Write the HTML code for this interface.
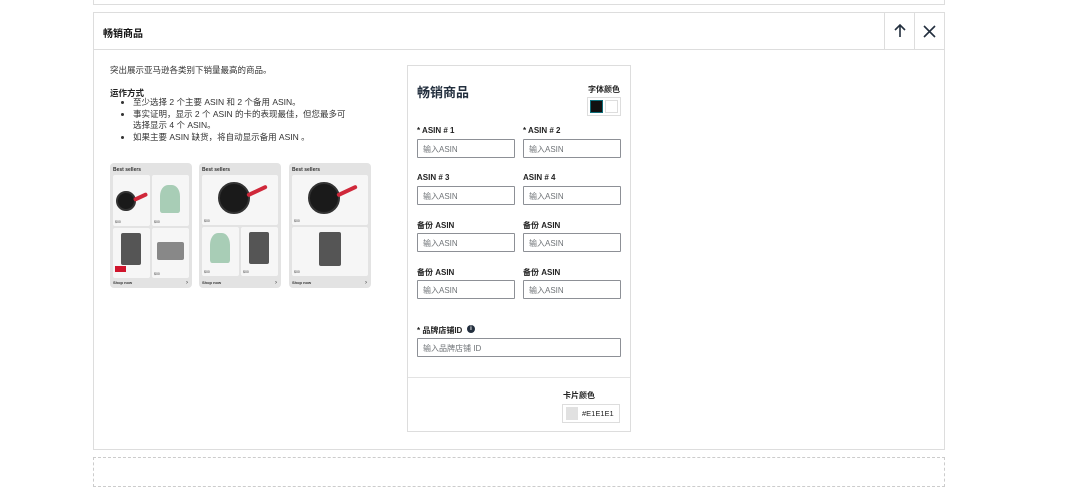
<!DOCTYPE html>
<html><head><meta charset="utf-8"><style>
*{box-sizing:border-box;margin:0;padding:0}
body{width:1080px;height:475px;background:#fff;position:relative;overflow:hidden;font-family:"Liberation Sans","Noto Sans CJK SC",sans-serif;color:#111;}
.a{position:absolute}
.lbl{position:absolute;font-size:8px;font-weight:bold;color:#222}
.inp{position:absolute;width:98px;height:19px;border:1px solid #8d9096;font-size:8px;color:#6f7377;padding:4px 5px;border-radius:1px}
.card{position:absolute;top:163px;width:82px;height:125px;background:#e3e3e3;border-radius:4px}
.card .t{position:absolute;left:3px;top:4px;font-size:5px;font-weight:bold;color:#333}
.card .s{position:absolute;left:3px;bottom:3px;font-size:4px;font-weight:bold;color:#333}
.card .ar{position:absolute;right:4px;bottom:2px;font-size:6px;color:#333}
.tile{position:absolute;background:#f6f6f6;border-radius:2px}
.pr{position:absolute;left:2px;bottom:2px;font-size:3.5px;color:#444}
.pan{position:absolute;border-radius:50%;background:#1a1a1a;border:2px solid #333}
.hd{position:absolute;height:4px;background:#d0283a;border-radius:2px;transform:rotate(-25deg)}
.ket{position:absolute;background:#a8cdb6;border-radius:40% 40% 10% 10%}
.cm{position:absolute;background:#555;border-radius:2px}
</style></head><body>
<div class="a" style="left:93px;top:-2px;width:852px;height:7px;border:1px solid #ddd"></div>
<div class="a" style="left:93px;top:12px;width:852px;height:438px;border:1px solid #ddd"></div>
<div class="a" style="left:94px;top:49px;width:850px;height:1px;background:#ddd"></div>
<div class="a" style="left:103px;top:25px;font-size:10px;font-weight:bold">畅销商品</div>
<div class="a" style="left:884px;top:13px;width:1px;height:36px;background:#ddd"></div>
<div class="a" style="left:914px;top:13px;width:1px;height:36px;background:#ddd"></div>
<svg class="a" style="left:892px;top:23px" width="16" height="16" viewBox="0 0 16 16"><path d="M8 14V2M3 7l5-5 5 5" fill="none" stroke="#232f3e" stroke-width="1.6"/></svg>
<svg class="a" style="left:922px;top:24px" width="15" height="15" viewBox="0 0 15 15"><path d="M2 2l11 11M13 2L2 13" fill="none" stroke="#232f3e" stroke-width="1.6"/></svg>
<div class="a" style="left:93px;top:457px;width:852px;height:30px;border:1px dashed #ccc"></div>

<div class="a" style="left:110px;top:65px;font-size:8.5px;color:#333;line-height:11px">突出展示亚马逊各类别下销量最高的商品。</div>
<div class="a" style="left:110px;top:87px;font-size:8.5px;font-weight:bold;color:#222">运作方式</div>
<ul class="a" style="left:133px;top:97px;width:219px;font-size:8.5px;color:#333;line-height:11.5px;list-style:disc">
<li>至少选择 2 个主要 ASIN 和 2 个备用 ASIN。</li>
<li>事实证明，显示 2 个 ASIN 的卡的表现最佳，但您最多可选择显示 4 个 ASIN。</li>
<li>如果主要 ASIN 缺货，将自动显示备用 ASIN 。</li>
</ul>

<div class="card" style="left:110px"><div class="t">Best sellers</div>
<div class="tile" style="left:3px;top:12px;width:37px;height:51px"><div class="pan" style="left:3px;top:16px;width:20px;height:20px"></div><div class="hd" style="left:20px;top:20px;width:15px"></div><div class="pr">$00</div></div>
<div class="tile" style="left:42px;top:12px;width:37px;height:51px"><div class="ket" style="left:8px;top:10px;width:20px;height:28px"></div><div class="pr">$00</div></div>
<div class="tile" style="left:3px;top:65px;width:37px;height:50px"><div class="cm" style="left:8px;top:5px;width:20px;height:32px"></div><div class="a" style="left:2px;top:38px;width:11px;height:6px;background:#d0142c"></div></div>
<div class="tile" style="left:42px;top:65px;width:37px;height:50px"><div class="cm" style="left:5px;top:14px;width:27px;height:18px;background:#888"></div><div class="pr">$00</div></div>
<div class="s">Shop now</div><div class="ar">›</div></div>

<div class="card" style="left:199px"><div class="t">Best sellers</div>
<div class="tile" style="left:3px;top:12px;width:76px;height:50px"><div class="pan" style="left:16px;top:7px;width:32px;height:32px"></div><div class="hd" style="left:44px;top:14px;width:22px"></div><div class="pr">$00</div></div>
<div class="tile" style="left:3px;top:64px;width:37px;height:49px"><div class="ket" style="left:8px;top:6px;width:20px;height:30px"></div><div class="pr">$00</div></div>
<div class="tile" style="left:42px;top:64px;width:37px;height:49px"><div class="cm" style="left:8px;top:5px;width:20px;height:32px"></div><div class="pr">$00</div></div>
<div class="s">Shop now</div><div class="ar">›</div></div>

<div class="card" style="left:289px"><div class="t">Best sellers</div>
<div class="tile" style="left:3px;top:12px;width:76px;height:50px"><div class="pan" style="left:16px;top:7px;width:32px;height:32px"></div><div class="hd" style="left:44px;top:14px;width:22px"></div><div class="pr">$00</div></div>
<div class="tile" style="left:3px;top:64px;width:76px;height:49px"><div class="cm" style="left:27px;top:5px;width:22px;height:34px"></div><div class="pr">$00</div></div>
<div class="s">Shop now</div><div class="ar">›</div></div>

<div class="a" style="left:407px;top:65px;width:224px;height:367px;border:1px solid #ddd"></div>
<div class="a" style="left:408px;top:377px;width:222px;height:1px;background:#e3e3e3"></div>
<div class="a" style="left:417px;top:82px;font-size:13px;font-weight:bold;color:#232f3e">畅销商品</div>
<div class="lbl" style="left:588px;top:84px">字体颜色</div>
<div class="a" style="left:587px;top:97px;width:34px;height:19px;border:1px solid #ddd"></div>
<div class="a" style="left:590px;top:100px;width:13px;height:13px;background:#111;border:1px solid #0e6d79"></div>
<div class="a" style="left:605px;top:100px;width:13px;height:13px;background:#fff;border:1px solid #ddd"></div>

<div class="lbl" style="left:417px;top:126px">* ASIN # 1</div><div class="lbl" style="left:523px;top:126px">* ASIN # 2</div>
<div class="inp" style="left:417px;top:139px">输入ASIN</div><div class="inp" style="left:523px;top:139px">输入ASIN</div>
<div class="lbl" style="left:417px;top:173px">ASIN # 3</div><div class="lbl" style="left:523px;top:173px">ASIN # 4</div>
<div class="inp" style="left:417px;top:186px">输入ASIN</div><div class="inp" style="left:523px;top:186px">输入ASIN</div>
<div class="lbl" style="left:417px;top:220px">备份 ASIN</div><div class="lbl" style="left:523px;top:220px">备份 ASIN</div>
<div class="inp" style="left:417px;top:233px">输入ASIN</div><div class="inp" style="left:523px;top:233px">输入ASIN</div>
<div class="lbl" style="left:417px;top:267px">备份 ASIN</div><div class="lbl" style="left:523px;top:267px">备份 ASIN</div>
<div class="inp" style="left:417px;top:280px">输入ASIN</div><div class="inp" style="left:523px;top:280px">输入ASIN</div>
<div class="lbl" style="left:417px;top:325px">* 品牌店铺ID</div>
<div class="a" style="left:467px;top:325px;width:8px;height:8px;border-radius:50%;background:#232f3e;color:#fff;font-size:6px;text-align:center;line-height:8px;font-weight:bold">i</div>
<div class="inp" style="left:417px;top:338px;width:204px">输入品牌店铺 ID</div>
<div class="lbl" style="left:563px;top:390px">卡片颜色</div>
<div class="a" style="left:562px;top:404px;width:58px;height:19px;border:1px solid #ddd"></div>
<div class="a" style="left:566px;top:407px;width:12px;height:13px;background:#e1e1e1"></div>
<div class="a" style="left:582px;top:409px;font-size:7.5px;color:#222">#E1E1E1</div>
</body></html>
